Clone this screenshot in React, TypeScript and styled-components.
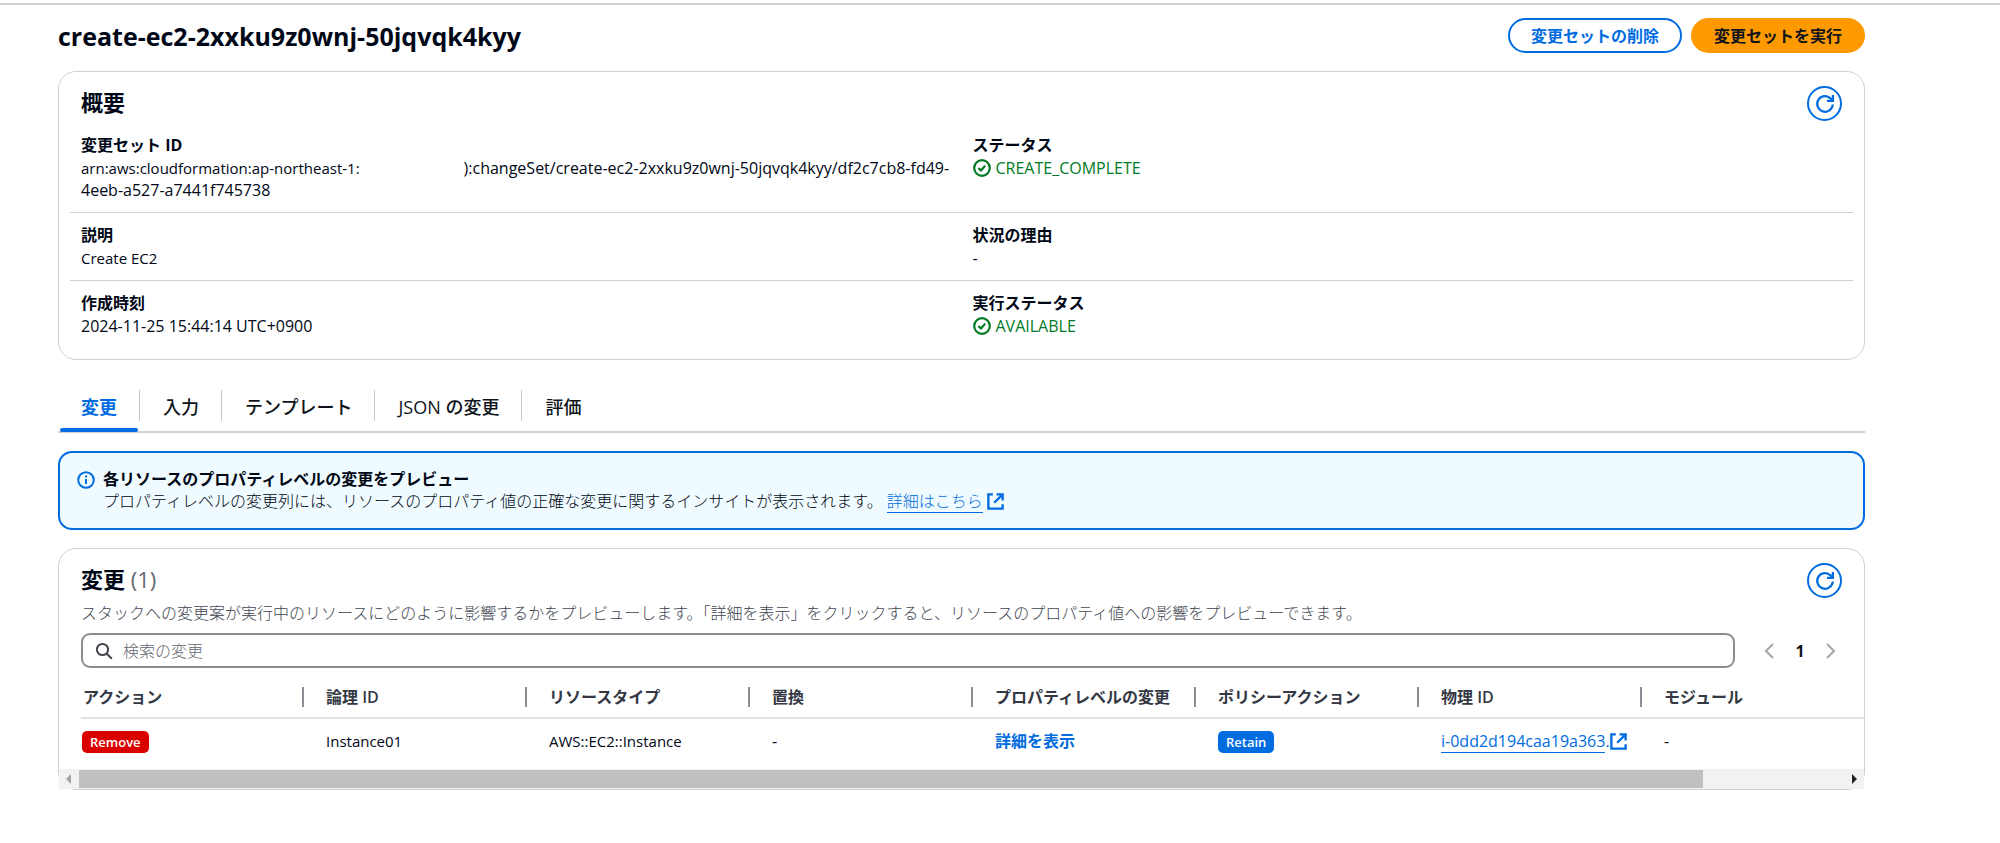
import React from "react";
import styled, { createGlobalStyle, css } from "styled-components";

const blue = "#006ce0";
const green = "#007a24";
const line = "#d0d1d7";
const ink = "#0f141a";

const GlobalStyle = createGlobalStyle`
  * { box-sizing: border-box; }
  body {
    margin: 0;
    background: #fff;
    color: #000716;
    font-family: "Open Sans", "Noto Sans CJK JP", sans-serif;
    font-size: 16px;
    line-height: 22px;
  }
  button, input { font: inherit; }
  h1, h2, p, dl, dd { margin: 0; }
`;

const Page = styled.div`
  margin-top: 3px;
  border-top: 2px solid ${line};
  padding: 13px 135px 48px 58px;
`;

const PageHeader = styled.header`
  display: flex;
  align-items: center;
  justify-content: space-between;
  margin-bottom: 18px;
`;

const Title = styled.h1`
  font-size: 25px;
  line-height: 32px;
  font-weight: 700;
`;

const Actions = styled.div`
  display: flex;
  gap: 9px;
`;

const Button = styled.button<{ $primary?: boolean }>`
  height: 35px;
  padding: 0 21px;
  border: 2px solid ${(p) => (p.$primary ? "#ff9900" : blue)};
  border-radius: 18px;
  background: ${(p) => (p.$primary ? "#ff9900" : "#fff")};
  color: ${(p) => (p.$primary ? ink : blue)};
  font-weight: 700;
  line-height: 22px;
  white-space: nowrap;
`;

const RoundButton = styled.button`
  display: flex;
  align-items: center;
  justify-content: center;
  width: 35px;
  height: 35px;
  padding: 0;
  border: 2px solid ${blue};
  border-radius: 50%;
  background: #fff;
  color: ${blue};
`;

const Card = styled.section`
  border: 1px solid ${line};
  border-radius: 18px;
  background: #fff;
`;

const CardHeader = styled.div`
  display: flex;
  align-items: flex-start;
  justify-content: space-between;
  padding: 14px 22px 0;
`;

const CardTitle = styled.h2`
  font-size: 22px;
  line-height: 32px;
  font-weight: 700;
  span {
    color: #656871;
    font-weight: 400;
  }
`;

const Details = styled.dl`
  padding: 2px 11px 8px;
`;

const DetailRow = styled.div`
  display: grid;
  grid-template-columns: 1fr 1fr;
  padding: 11px 0;
  & + & { border-top: 1px solid ${line}; }
`;

const Detail = styled.div`
  padding: 0 11px;
  dt { font-weight: 700; line-height: 23px; }
  dd { line-height: 22px; }
`;

const Identifier = styled.span`
  font-size: 15px;
`;

const Redacted = styled.span`
  display: inline-block;
  width: 104px;
`;

const Status = styled.span`
  display: inline-flex;
  align-items: center;
  gap: 5px;
  color: ${green};
`;

const Tabs = styled.div`
  display: flex;
  align-items: stretch;
  margin: 22px 0 18px;
  border-bottom: 2px solid ${line};
`;

const Tab = styled.button<{ $active?: boolean }>`
  position: relative;
  height: 49px;
  padding: 0 23px;
  border: 0;
  background: none;
  color: ${(p) => (p.$active ? blue : ink)};
  font-size: 18px;
  line-height: 28px;
  font-weight: ${(p) => (p.$active ? 700 : 500)};
  white-space: nowrap;
  &:not(:last-child)::before {
    content: "";
    position: absolute;
    top: 8px;
    bottom: 10px;
    right: 0;
    width: 1px;
    background: #c6c6cd;
  }
  ${(p) =>
    p.$active &&
    css`
      &::after {
        content: "";
        position: absolute;
        left: 2px;
        right: 2px;
        bottom: -1px;
        height: 4px;
        border-radius: 2px;
        background: ${blue};
      }
    `}
`;

const Alert = styled.div`
  display: flex;
  gap: 8px;
  margin-bottom: 18px;
  padding: 15px 18px 16px 17px;
  border: 2px solid ${blue};
  border-radius: 14px;
  background: #f0fbff;
  svg { flex: none; }
  p { font-weight: 300; }
`;

const AlertTitle = styled.div`
  font-weight: 700;
`;

const Link = styled.a`
  color: ${blue};
  text-decoration: none;
  span {
    border-bottom: 1px solid ${blue};
  }
  svg {
    vertical-align: -3px;
  }
`;

const Description = styled.p`
  padding: 3px 22px 0;
  color: #424650;
  font-weight: 300;
  line-height: 24px;
`;

const Tools = styled.div`
  display: flex;
  align-items: center;
  gap: 24px;
  padding: 8px 23px 0 22px;
`;

const SearchBox = styled.label`
  display: flex;
  flex: 1;
  align-items: center;
  gap: 10px;
  height: 35px;
  padding: 0 12px;
  border: 2px solid #8c8c94;
  border-radius: 9px;
  color: #424650;
  input {
    flex: 1;
    min-width: 0;
    padding: 0;
    border: 0;
    outline: 0;
    background: none;
    font-weight: 300;
  }
  input::placeholder { color: #656871; opacity: 1; }
`;

const Pager = styled.nav`
  display: flex;
  align-items: center;
  gap: 11px;
`;

const PageButton = styled.button<{ $current?: boolean }>`
  display: flex;
  align-items: center;
  justify-content: center;
  width: 20px;
  height: 24px;
  padding: 0;
  border: 0;
  background: none;
  color: ${(p) => (p.$current ? ink : "#a4a4ad")};
  font-weight: 700;
`;

const TableScroll = styled.div`
  margin-left: 22px;
  overflow: hidden;
`;

const Table = styled.table`
  table-layout: fixed;
  width: 109%;
  border-collapse: separate;
  border-spacing: 0;
  th, td {
    padding: 0 0 0 22px;
    text-align: left;
    white-space: nowrap;
  }
  th {
    height: 51px;
    padding-top: 8px;
    border-bottom: 2px solid #e3e3e7;
    color: #333843;
    font-weight: 600;
  }
  td { height: 44px; }
  th:first-child, td:first-child { padding-left: 1px; }
`;

const Column = styled.col`
  width: 223px;
`;

const HeadLabel = styled.div<{ $divided: boolean }>`
  margin-left: -24px;
  padding-left: ${(p) => (p.$divided ? 22 : 23)}px;
  border-left: 2px solid ${(p) => (p.$divided ? "#8c8c94" : "transparent")};
  line-height: 20px;
`;

const Badge = styled.span<{ $tone: string }>`
  display: inline-block;
  padding: 0 8px;
  border-radius: 5px;
  background: ${(p) => p.$tone};
  color: #fff;
  font-size: 13px;
  font-weight: 600;
  line-height: 22px;
`;

const TextButton = styled.button`
  padding: 0;
  border: 0;
  background: none;
  color: ${blue};
  font-weight: 700;
`;

const ScrollBar = styled.div`
  display: flex;
  align-items: center;
  height: 20px;
  margin-top: 6px;
  padding: 1px 0;
  background: #f1f2f2;
`;

const ScrollArrow = styled.span`
  display: flex;
  justify-content: center;
  flex: 0 0 20px;
`;

const ScrollTrack = styled.span`
  flex: 1;
  height: 18px;
`;

const ScrollThumb = styled.span`
  display: block;
  width: 92%;
  height: 18px;
  background: #c0c0c0;
`;

const RefreshIcon = () => (
  <svg width="20" height="20" viewBox="0 0 20 20" fill="none" stroke="currentColor" strokeWidth="2.2" aria-hidden="true">
    <path d="M17.8 10.5a7.8 7.8 0 1 1-2.3-6.1L17.6 6.5" />
    <path d="M17.9 1v5.9H12" />
  </svg>
);

const CheckIcon = () => (
  <svg width="18" height="18" viewBox="0 0 18 18" fill="none" stroke="currentColor" strokeWidth="2.2" aria-hidden="true">
    <circle cx="9" cy="9" r="7.8" />
    <path d="M5.4 9.2 8 11.4 12.2 6.6" />
  </svg>
);

const InfoIcon = () => (
  <svg width="18" height="22" viewBox="0 0 18 22" fill="none" stroke={blue} strokeWidth="2" aria-hidden="true">
    <circle cx="9" cy="12" r="7.8" />
    <path d="M9 11v5M9 7.4v2" />
  </svg>
);

const ExternalIcon = () => (
  <svg width="17" height="17" viewBox="0 0 16 16" fill="none" stroke="currentColor" strokeWidth="2.2" aria-hidden="true">
    <path d="M5.5 1.3H1.3V14.7H14.7V10.5" />
    <path d="M9 1.3h5.7V7M14.5 1.5 6.8 9.2" />
  </svg>
);

const SearchIcon = () => (
  <svg width="18" height="18" viewBox="0 0 18 18" fill="none" stroke="currentColor" strokeWidth="2" aria-hidden="true">
    <circle cx="7.5" cy="7.5" r="5.6" />
    <path d="m11.5 11.5 5.3 5.3" />
  </svg>
);

const Chevron = ({ next }: { next?: boolean }) => (
  <svg width="10" height="16" viewBox="0 0 10 16" fill="none" stroke="currentColor" strokeWidth="2" aria-hidden="true">
    <path d={next ? "M1 1l7 7-7 7" : "M9 1 2 8l7 7"} />
  </svg>
);

const headings = [
  "アクション",
  "論理 ID",
  "リソースタイプ",
  "置換",
  "プロパティレベルの変更",
  "ポリシーアクション",
  "物理 ID",
  "モジュール",
];

const tabs = ["変更", "入力", "テンプレート", "JSON の変更", "評価"];

export default function App() {
  return (
    <>
      <GlobalStyle />
      <Page>
        <PageHeader>
          <Title>create-ec2-2xxku9z0wnj-50jqvqk4kyy</Title>
          <Actions>
            <Button>変更セットの削除</Button>
            <Button $primary>変更セットを実行</Button>
          </Actions>
        </PageHeader>

        <Card>
          <CardHeader>
            <CardTitle>概要</CardTitle>
            <RoundButton aria-label="更新"><RefreshIcon /></RoundButton>
          </CardHeader>
          <Details>
            <DetailRow>
              <Detail>
                <dt>変更セット ID</dt>
                <dd>
                  <Identifier>arn:aws:cloudformation:ap-northeast-1:</Identifier>
                  <Redacted />
                  ):changeSet/create-ec2-2xxku9z0wnj-50jqvqk4kyy/df2c7cb8-fd49-4eeb-a527-a7441f745738
                </dd>
              </Detail>
              <Detail>
                <dt>ステータス</dt>
                <dd><Status><CheckIcon />CREATE_COMPLETE</Status></dd>
              </Detail>
            </DetailRow>
            <DetailRow>
              <Detail>
                <dt>説明</dt>
                <dd><Identifier>Create EC2</Identifier></dd>
              </Detail>
              <Detail>
                <dt>状況の理由</dt>
                <dd>-</dd>
              </Detail>
            </DetailRow>
            <DetailRow>
              <Detail>
                <dt>作成時刻</dt>
                <dd>2024-11-25 15:44:14 UTC+0900</dd>
              </Detail>
              <Detail>
                <dt>実行ステータス</dt>
                <dd><Status><CheckIcon />AVAILABLE</Status></dd>
              </Detail>
            </DetailRow>
          </Details>
        </Card>

        <Tabs role="tablist">
          {tabs.map((label, i) => (
            <Tab key={label} role="tab" aria-selected={i === 0} $active={i === 0}>{label}</Tab>
          ))}
        </Tabs>

        <Alert>
          <InfoIcon />
          <div>
            <AlertTitle>各リソースのプロパティレベルの変更をプレビュー</AlertTitle>
            <p>
              プロパティレベルの変更列には、リソースのプロパティ値の正確な変更に関するインサイトが表示されます。{" "}
              <Link href="#details"><span>詳細はこちら</span> <ExternalIcon /></Link>
            </p>
          </div>
        </Alert>

        <Card>
          <CardHeader>
            <CardTitle>変更 <span>(1)</span></CardTitle>
            <RoundButton aria-label="更新"><RefreshIcon /></RoundButton>
          </CardHeader>
          <Description>
            スタックへの変更案が実行中のリソースにどのように影響するかをプレビューします。「詳細を表示」をクリックすると、リソースのプロパティ値への影響をプレビューできます。
          </Description>
          <Tools>
            <SearchBox>
              <SearchIcon />
              <input type="search" aria-label="検索の変更" placeholder="検索の変更" />
            </SearchBox>
            <Pager aria-label="ページ">
              <PageButton aria-label="前へ"><Chevron /></PageButton>
              <PageButton $current>1</PageButton>
              <PageButton aria-label="次へ"><Chevron next /></PageButton>
            </Pager>
          </Tools>
          <TableScroll>
            <Table>
              <colgroup>
                {headings.map((h) => <Column key={h} />)}
                <col />
              </colgroup>
              <thead>
                <tr>
                  {headings.map((h, i) => (
                    <th key={h} scope="col"><HeadLabel $divided={i > 0}>{h}</HeadLabel></th>
                  ))}
                  <th aria-hidden="true" />
                </tr>
              </thead>
              <tbody>
                <tr>
                  <td><Badge $tone="#db0000">Remove</Badge></td>
                  <td><Identifier>Instance01</Identifier></td>
                  <td><Identifier>AWS::EC2::Instance</Identifier></td>
                  <td>-</td>
                  <td><TextButton>詳細を表示</TextButton></td>
                  <td><Badge $tone={blue}>Retain</Badge></td>
                  <td><Link href="#instance"><span>i-0dd2d194caa19a363</span>.<ExternalIcon /></Link></td>
                  <td>-</td>
                  <td />
                </tr>
              </tbody>
            </Table>
          </TableScroll>
          <ScrollBar aria-hidden="true">
            <ScrollArrow>
              <svg width="6" height="10" viewBox="0 0 6 10"><path d="M5 0v10L0 5z" fill="#a3a3a3" /></svg>
            </ScrollArrow>
            <ScrollTrack><ScrollThumb /></ScrollTrack>
            <ScrollArrow>
              <svg width="6" height="10" viewBox="0 0 6 10"><path d="M1 0v10l5-5z" fill="#222" /></svg>
            </ScrollArrow>
          </ScrollBar>
        </Card>
      </Page>
    </>
  );
}
